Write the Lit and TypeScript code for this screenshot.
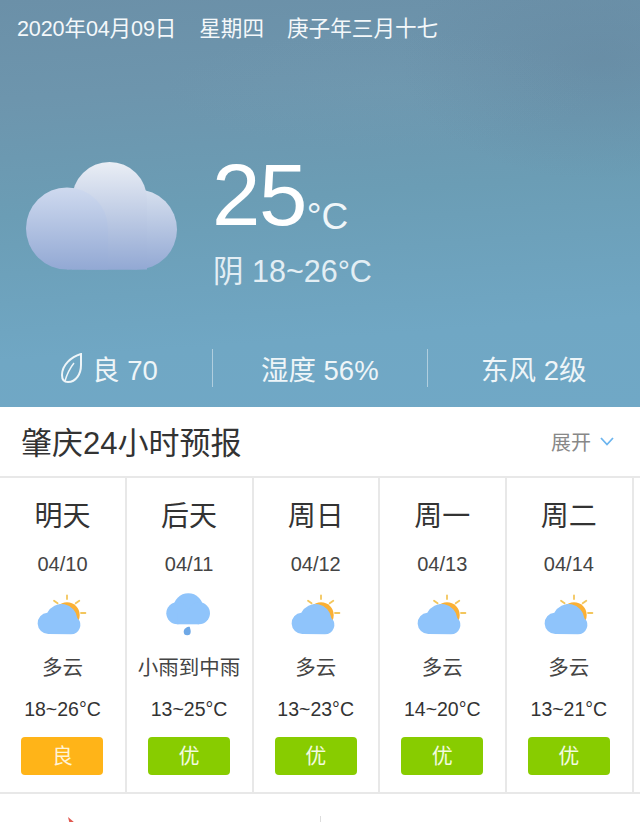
import { LitElement, html, css, svg } from 'lit';
import { customElement } from 'lit/decorators.js';

const days = [
  { name: '明天', date: '04/10', icon: 'sun', desc: '多云', temp: '18~26°C', aq: '良', warn: true },
  { name: '后天', date: '04/11', icon: 'rain', desc: '小雨到中雨', temp: '13~25°C', aq: '优', warn: false },
  { name: '周日', date: '04/12', icon: 'sun', desc: '多云', temp: '13~23°C', aq: '优', warn: false },
  { name: '周一', date: '04/13', icon: 'sun', desc: '多云', temp: '14~20°C', aq: '优', warn: false },
  { name: '周二', date: '04/14', icon: 'sun', desc: '多云', temp: '13~21°C', aq: '优', warn: false },
];

const sunCloud = svg`
  <svg class="icon" width="50" height="44" viewBox="0 0 50 44">
    <g stroke="#f3c65c" stroke-width="1.800" stroke-linecap="round">
      <line x1="30" y1="0.500" x2="30" y2="4" />
      <line x1="17" y1="5.700" x2="20.600" y2="8.300" />
      <line x1="42.300" y1="5.700" x2="38.700" y2="8.300" />
      <line x1="44" y1="18" x2="48.400" y2="18" />
    </g>
    <circle cx="30" cy="20" r="12.700" fill="#fbb034" />
    <path d="M11.300 39A10.700 10.700 0 0 1 10.300 17.650A16 16 0 0 1 40.400 23.300A9.300 9.300 0 0 1 34 39.300Z" fill="#8fc4fb" />
  </svg>`;

const rainCloud = svg`
  <svg class="icon" width="50" height="44" viewBox="0 0 50 44">
    <g fill="#8fc4fb">
      <circle cx="24.300" cy="13.300" r="15" />
      <circle cx="13.300" cy="18.300" r="11" />
      <circle cx="35" cy="18.300" r="11" />
      <rect x="13.300" y="18" width="21.700" height="11.300" />
    </g>
    <path d="M25.700 31.700c.6 2.500 1 3.300 1 5a3.500 3.500 0 1 1-7 0c0-3 3-5 6-5z" fill="#6ea8e6" />
  </svg>`;

@customElement('app-root')
export class AppRoot extends LitElement {
  static styles = css`
    :host {
      display: block;
      height: 822px;
      overflow: hidden;
      background: #fff;
      font-family: 'Liberation Sans', 'Noto Sans CJK SC', sans-serif;
    }
    .hero {
      height: 407px;
      box-sizing: border-box;
      padding: 16px 17px 0;
      color: #fff;
      display: flex;
      flex-direction: column;
      background:
        radial-gradient(ellipse 220px 60px at 380px 90px, rgba(125, 165, 185, 0.12), transparent),
        radial-gradient(ellipse 200px 120px at 600px 60px, rgba(95, 125, 150, 0.3), transparent),
        linear-gradient(176deg, #6b90a8 0%, #6d95ad 22%, #6b9db5 48%, #70a7c4 80%, #70a8c6 100%);
    }
    .date {
      display: flex;
      gap: 23px;
      font-size: 21.600px;
      line-height: 26px;
      height: 26px;
      color: #f4f8fa;
    }
    .date span:first-child { letter-spacing: -0.150px; }
    .now {
      display: flex;
      margin-top: 120px;
      margin-left: 9px;
      height: 110px;
    }
    .now-text { margin-left: 34px; margin-top: -10px; }
    .temp {
      display: flex;
      align-items: flex-end;
      height: 86px;
    }
    .temp b {
      font-weight: 400;
      font-size: 87px;
      line-height: 86px;
      letter-spacing: -1.500px;
    }
    .temp span {
      font-size: 37px;
      line-height: 37px;
      margin-left: 1px;
      margin-bottom: 3px;
      color: #f0f6f9;
    }
    .range {
      font-size: 30.500px;
      line-height: 36px;
      margin-top: 15px;
      margin-left: 1px;
      color: #e3eef4;
      white-space: nowrap;
    }
    .stats {
      display: flex;
      margin: 77px -17px 0;
      height: 38px;
      align-items: center;
    }
    .stat {
      display: flex;
      align-items: center;
      justify-content: center;
      gap: 9px;
      height: 38px;
      font-size: 27.500px;
      color: #eef5f8;
      border-left: 1px solid rgba(255, 255, 255, 0.45);
      white-space: nowrap;
    }
    .stat:nth-child(1) { width: 212.500px; border-left: none; padding-left: 7px; box-sizing: border-box; }
    .stat:nth-child(2) { width: 214.500px; }
    .stat:nth-child(3) { width: 213px; }
    .head {
      height: 71px;
      box-sizing: border-box;
      padding: 0 26px 0 21px;
      display: flex;
      align-items: center;
      justify-content: space-between;
      border-bottom: 2px solid #e8e8e8;
    }
    .head h2 {
      margin: 0;
      font-weight: 400;
      font-size: 31px;
      color: #333;
      position: relative;
      top: -1px;
    }
    .more {
      display: flex;
      align-items: center;
      gap: 9px;
      font-size: 20px;
      color: #888;
    }
    .days {
      display: flex;
      height: 316px;
      box-sizing: border-box;
      padding-left: 0.700px;
      border-bottom: 2px solid #e8e8e8;
    }
    .day {
      flex: 0 0 126.600px;
      box-sizing: border-box;
      border-right: 2px solid #e8e8e8;
      display: flex;
      flex-direction: column;
      align-items: center;
      padding: 21px 1px 0 0;
      color: #333;
    }
    .name { font-size: 28px; line-height: 36px; height: 36px; }
    .day-date { font-size: 20px; line-height: 24px; margin-top: 17px; color: #444; }
    .icon { margin-top: 19px; display: block; overflow: visible; }
    .desc { font-size: 20.500px; line-height: 26px; margin-top: 16px; white-space: nowrap; color: #444; }
    .range-day { font-size: 19.500px; line-height: 24px; margin-top: 16px; color: #333; }
    .aq {
      width: 82px;
      height: 38px;
      margin-top: 16px;
      border-radius: 4px;
      background: #88cc00;
      color: #f3fbe0;
      font-size: 21px;
      line-height: 37px;
      text-align: center;
    }
    .aq.warn { background: #ffb418; color: #fff3d6; }
    .foot {
      position: relative;
      height: 28px;
    }
    .foot .rule {
      position: absolute;
      left: 320px;
      top: 22px;
      width: 1px;
      height: 8px;
      background: #ddd;
    }
    .foot .mark {
      position: absolute;
      left: 67px;
      top: 23px;
    }
  `;

  render() {
    return html`
      <section class="hero">
        <div class="date">
          <span>2020年04月09日</span><span>星期四</span><span>庚子年三月十七</span>
        </div>
        <div class="now">
          <svg width="152" height="110" viewBox="0 0 152 110">
            <defs>
              <linearGradient id="c1" gradientUnits="userSpaceOnUse" x1="0" y1="28" x2="0" y2="107">
                <stop offset="0" stop-color="#d6dfee" />
                <stop offset="1" stop-color="#93a9d4" />
              </linearGradient>
              <linearGradient id="c2" gradientUnits="userSpaceOnUse" x1="0" y1="0" x2="0" y2="107">
                <stop offset="0" stop-color="#eaeef5" />
                <stop offset="1" stop-color="#93a9d4" />
              </linearGradient>
              <linearGradient id="c3" gradientUnits="userSpaceOnUse" x1="0" y1="25" x2="0" y2="107">
                <stop offset="0" stop-color="#cfdaef" />
                <stop offset="1" stop-color="#93a9d4" />
              </linearGradient>
            </defs>
            <g fill="url(#c1)">
              <circle cx="111" cy="67.500" r="40" />
              <rect x="60" y="67" width="51" height="40.500" />
            </g>
            <g fill="url(#c2)">
              <circle cx="83.500" cy="37.500" r="37.500" />
              <rect x="46" y="37" width="75" height="70.500" />
            </g>
            <g fill="url(#c3)">
              <circle cx="41" cy="66.500" r="41" />
              <rect x="41" y="66" width="41" height="41.500" />
            </g>
          </svg>
          <div class="now-text">
            <div class="temp"><b>25</b><span>°C</span></div>
            <div class="range">阴 18~26°C</div>
          </div>
        </div>
        <div class="stats">
          <div class="stat">
            <svg width="22" height="30" viewBox="0 0 22 30" fill="none" stroke="#eef5f8" stroke-width="2">
              <path d="M20 1C10 4 1 12 1 22c0 4 2 7 6 7 8 0 13-8 13-17 0-4 0-8 0-11z" />
              <path d="M13 10C9 15 6 21 4 28" stroke-width="1.500" />
            </svg>
            <span>良 70</span>
          </div>
          <div class="stat">湿度 56%</div>
          <div class="stat">东风 2级</div>
        </div>
      </section>
      <header class="head">
        <h2>肇庆24小时预报</h2>
        <div class="more">
          <span>展开</span>
          <svg width="14" height="9" viewBox="0 0 14 9" fill="none" stroke="#6cb5ef" stroke-width="1.800">
            <path d="M1 1l6 6.500L13 1" />
          </svg>
        </div>
      </header>
      <div class="days">
        ${days.map(
          (d) => html`
            <div class="day">
              <div class="name">${d.name}</div>
              <div class="day-date">${d.date}</div>
              ${d.icon === 'sun' ? sunCloud : rainCloud}
              <div class="desc">${d.desc}</div>
              <div class="range-day">${d.temp}</div>
              <div class="aq ${d.warn ? 'warn' : ''}">${d.aq}</div>
            </div>
          `
        )}
      </div>
      <div class="foot">
        <svg class="mark" width="12" height="8" viewBox="0 0 12 8">
          <path d="M1 0l7 6 2 2H3z" fill="#e0584f" />
        </svg>
        <div class="rule"></div>
      </div>
    `;
  }
}
